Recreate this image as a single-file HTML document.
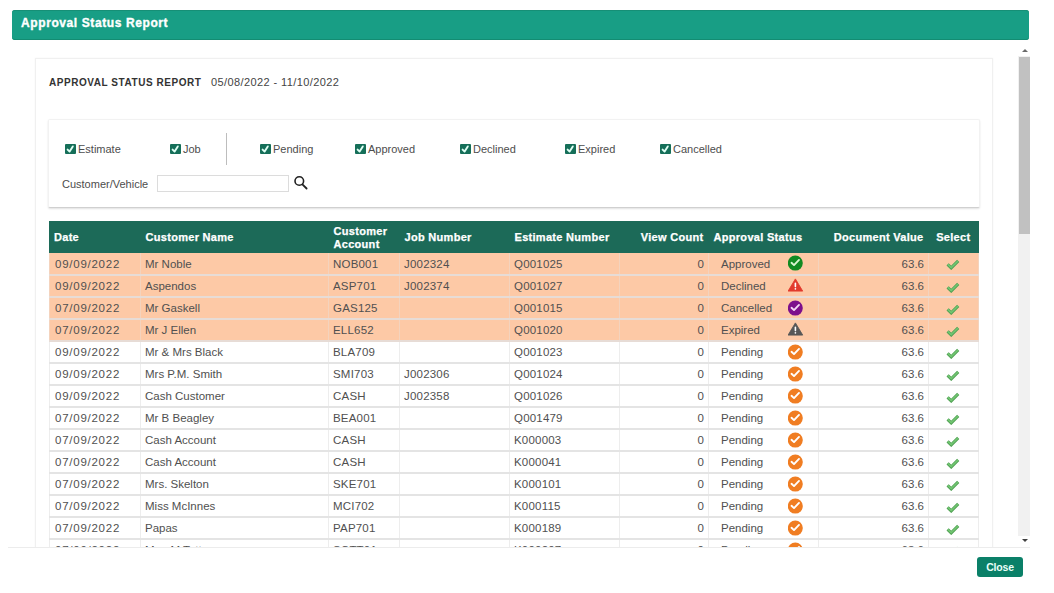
<!DOCTYPE html>
<html><head><meta charset="utf-8">
<style>
*{box-sizing:border-box}
html,body{margin:0;padding:0;background:#fff;width:1054px;height:593px;overflow:hidden;font-family:"Liberation Sans",sans-serif;color:#4d4d4d}
.hdr{position:absolute;left:12px;top:10px;width:1017px;height:30px;background:#189e85;border-radius:3px;box-shadow:inset 0 -1px 0 #138c72,inset 0 1px 0 #168f76;color:#fff;font-weight:bold;font-size:12px;line-height:30px;padding-left:9px;letter-spacing:0.6px;-webkit-text-stroke:0.35px #fff}
.hdr span{position:relative;top:-2px}
.clip{position:absolute;left:0;top:0;width:1054px;height:548px;overflow:hidden}
.footline{position:absolute;left:8px;top:547px;width:1022px;height:1px;background:#ececec}
.sb{position:absolute;left:1018px;top:56px;width:12px;height:480px;background:#f1f1f1}
.thumb{position:absolute;left:1019px;top:57px;width:11px;height:177px;background:#c1c1c1}
.arr{position:absolute;left:1022px;width:0;height:0;border-left:3px solid transparent;border-right:3px solid transparent}
.arr.up{top:49px;border-bottom:3px solid #6a6a6a}
.arr.dn{top:539px;border-top:3px solid #404040}
.card{position:absolute;left:35px;top:58px;width:958px;height:520px;border:1px solid #f0f0f0;box-shadow:0 0 2px rgba(0,0,0,0.04);background:#fff}
.title{position:absolute;left:49px;top:77px;font-size:10px;font-weight:bold;color:#333;letter-spacing:0.55px}
.dates{position:absolute;left:211px;top:76px;font-size:11px;color:#444;letter-spacing:0.4px}
.panel{position:absolute;left:48px;top:119px;width:932px;height:89px;border:1px solid #f2f2f2;border-bottom:1px solid #d0d0d0;box-shadow:0 1px 2px rgba(0,0,0,0.12);background:#fff;border-radius:2px}
.cb{position:absolute;top:144px;width:10.5px;height:10px;background:#156f59;border-radius:1px}
.cb svg{position:absolute;left:0;top:0}
.cbl{position:absolute;top:143px;font-size:11px;color:#4d4d4d;line-height:12px}
.divider{position:absolute;left:226px;top:133px;width:1px;height:32px;background:#bdbdbd}
.lbl{position:absolute;left:62px;top:178px;font-size:11px;color:#4d4d4d;line-height:12px}
.inp{position:absolute;left:157px;top:175px;width:132px;height:17px;border:1px solid #dcdcdc;background:#fff}
.srch{position:absolute;left:293px;top:175px}
table{position:absolute;left:49px;top:221px;border-collapse:collapse;font-size:11.5px;table-layout:fixed;width:930px}
th{background:#1c6a58;color:#fff;font-weight:bold;font-size:11px;letter-spacing:0.3px;text-align:left;height:32px;padding:2px 5px 0 5px;line-height:13.5px;vertical-align:middle;border:0;-webkit-text-stroke:0.25px #fff}
td{height:22px;padding:0 4px 0 5px;border-style:solid;border-width:2px 1px;border-color:#e4e4e4 #ededed;white-space:nowrap;color:#505050;vertical-align:middle}
tr:nth-child(2) td{border-top:0}
th:first-child{border-left:1px solid #1c6a58;padding-left:4px}
th:last-child{border-right:1px solid #1c6a58}
td.d0{letter-spacing:0.75px;padding-left:5px}
td.d{letter-spacing:0.2px;padding-left:4px}
td.n{padding-left:4px}
tr.o td{background:#fdc9a6;border-color:#e7dcd6 #f4d3bd}
td.r{text-align:right}
td.st{position:relative;padding-left:12px}
.ic{position:absolute;left:79px;top:2px}
td.c{position:relative}
.sel{position:absolute;left:17px;top:5px}
.close{position:absolute;left:977px;top:557px;width:46px;height:20px;background:#0a8068;border-radius:3px;color:#e8fff8;font-size:10.5px;font-weight:bold;text-align:center;line-height:21px;letter-spacing:-0.2px}
</style></head><body>
<div class="hdr"><span>Approval Status Report</span></div>
<div class="clip">
<div class="card"></div>
<div class="title">APPROVAL STATUS REPORT</div>
<div class="dates">05/08/2022 - 11/10/2022</div>
<div class="panel"></div>
<div class="cb" style="left:65px"><svg width="11" height="10" viewBox="0 0 11 10"><path d="M2.6 5.6 L4.6 7.6 L7.8 2.4" fill="none" stroke="#dffff4" stroke-width="1.9" stroke-linecap="round" stroke-linejoin="round"/></svg></div><div class="cbl" style="left:78px">Estimate</div>
<div class="cb" style="left:170px"><svg width="11" height="10" viewBox="0 0 11 10"><path d="M2.6 5.6 L4.6 7.6 L7.8 2.4" fill="none" stroke="#dffff4" stroke-width="1.9" stroke-linecap="round" stroke-linejoin="round"/></svg></div><div class="cbl" style="left:183px">Job</div>
<div class="divider"></div>
<div class="cb" style="left:260px"><svg width="11" height="10" viewBox="0 0 11 10"><path d="M2.6 5.6 L4.6 7.6 L7.8 2.4" fill="none" stroke="#dffff4" stroke-width="1.9" stroke-linecap="round" stroke-linejoin="round"/></svg></div><div class="cbl" style="left:273px">Pending</div>
<div class="cb" style="left:355px"><svg width="11" height="10" viewBox="0 0 11 10"><path d="M2.6 5.6 L4.6 7.6 L7.8 2.4" fill="none" stroke="#dffff4" stroke-width="1.9" stroke-linecap="round" stroke-linejoin="round"/></svg></div><div class="cbl" style="left:368px">Approved</div>
<div class="cb" style="left:460px"><svg width="11" height="10" viewBox="0 0 11 10"><path d="M2.6 5.6 L4.6 7.6 L7.8 2.4" fill="none" stroke="#dffff4" stroke-width="1.9" stroke-linecap="round" stroke-linejoin="round"/></svg></div><div class="cbl" style="left:473px">Declined</div>
<div class="cb" style="left:565px"><svg width="11" height="10" viewBox="0 0 11 10"><path d="M2.6 5.6 L4.6 7.6 L7.8 2.4" fill="none" stroke="#dffff4" stroke-width="1.9" stroke-linecap="round" stroke-linejoin="round"/></svg></div><div class="cbl" style="left:578px">Expired</div>
<div class="cb" style="left:660px"><svg width="11" height="10" viewBox="0 0 11 10"><path d="M2.6 5.6 L4.6 7.6 L7.8 2.4" fill="none" stroke="#dffff4" stroke-width="1.9" stroke-linecap="round" stroke-linejoin="round"/></svg></div><div class="cbl" style="left:673px">Cancelled</div>
<div class="lbl">Customer/Vehicle</div>
<div class="inp"></div>
<svg class="srch" width="16" height="16" viewBox="0 0 16 16"><circle cx="6.3" cy="6" r="4.3" fill="none" stroke="#222" stroke-width="1.6"/><path d="M9.4 9.3 L13.6 13.5" stroke="#222" stroke-width="1.8" stroke-linecap="round"/></svg>
<table>
<colgroup><col style="width:91px"><col style="width:188px"><col style="width:71px"><col style="width:110px"><col style="width:110px"><col style="width:89px"><col style="width:110px"><col style="width:110px"><col style="width:50px"></colgroup>
<tr><th>Date</th><th>Customer Name</th><th>Customer Account</th><th>Job Number</th><th>Estimate Number</th><th style="text-align:right">View Count</th><th>Approval Status</th><th style="text-align:right">Document Value</th><th style="text-align:center;padding:2px 0 0 0">Select</th></tr>
<tr class="o"><td class="d0">09/09/2022</td><td class="n">Mr Noble</td><td class="d">NOB001</td><td class="d">J002324</td><td class="d">Q001025</td><td class="r">0</td><td class="st">Approved<svg class="ic" width="16" height="16" viewBox="0 0 16 16"><circle cx="7.3" cy="8.1" r="7.5" fill="#118a22"/><path d="M3.5 7.8 L6.0 10.1 L11.0 4.9" fill="none" stroke="#d8f5d0" stroke-width="1.9" stroke-linecap="round" stroke-linejoin="round"/></svg></td><td class="r">63.6</td><td class="c"><svg class="sel" width="16" height="12" viewBox="0 0 16 12"><path d="M1.6 6.4 L5.2 9.9 L12.2 2.8" fill="none" stroke="#4f9f52" stroke-width="3.1" stroke-linecap="butt" stroke-linejoin="miter"/><path d="M1.9 6.4 L5.2 9.6 L12.0 3.0" fill="none" stroke="#72c672" stroke-width="1.6" stroke-linecap="butt" stroke-linejoin="miter"/></svg></td></tr>
<tr class="o"><td class="d0">09/09/2022</td><td class="n">Aspendos</td><td class="d">ASP701</td><td class="d">J002374</td><td class="d">Q001027</td><td class="r">0</td><td class="st">Declined<svg class="ic" width="16" height="16" viewBox="0 0 16 16"><path d="M7.4 0.9 L14.7 13.1 L0.1 13.1 Z" fill="#e23b2e" stroke="#e23b2e" stroke-width="0.9" stroke-linejoin="round"/><path d="M7.4 5.4 L7.4 8.6" stroke="#fff" stroke-width="1.6" stroke-linecap="round"/><circle cx="7.4" cy="10.8" r="0.85" fill="#fff"/></svg></td><td class="r">63.6</td><td class="c"><svg class="sel" width="16" height="12" viewBox="0 0 16 12"><path d="M1.6 6.4 L5.2 9.9 L12.2 2.8" fill="none" stroke="#4f9f52" stroke-width="3.1" stroke-linecap="butt" stroke-linejoin="miter"/><path d="M1.9 6.4 L5.2 9.6 L12.0 3.0" fill="none" stroke="#72c672" stroke-width="1.6" stroke-linecap="butt" stroke-linejoin="miter"/></svg></td></tr>
<tr class="o"><td class="d0">07/09/2022</td><td class="n">Mr Gaskell</td><td class="d">GAS125</td><td class="d"></td><td class="d">Q001015</td><td class="r">0</td><td class="st">Cancelled<svg class="ic" width="16" height="16" viewBox="0 0 16 16"><circle cx="7.3" cy="8.1" r="7.5" fill="#7d0f8c"/><path d="M3.5 7.8 L6.0 10.1 L11.0 4.9" fill="none" stroke="#f4d6f4" stroke-width="1.9" stroke-linecap="round" stroke-linejoin="round"/></svg></td><td class="r">63.6</td><td class="c"><svg class="sel" width="16" height="12" viewBox="0 0 16 12"><path d="M1.6 6.4 L5.2 9.9 L12.2 2.8" fill="none" stroke="#4f9f52" stroke-width="3.1" stroke-linecap="butt" stroke-linejoin="miter"/><path d="M1.9 6.4 L5.2 9.6 L12.0 3.0" fill="none" stroke="#72c672" stroke-width="1.6" stroke-linecap="butt" stroke-linejoin="miter"/></svg></td></tr>
<tr class="o"><td class="d0">07/09/2022</td><td class="n">Mr J Ellen</td><td class="d">ELL652</td><td class="d"></td><td class="d">Q001020</td><td class="r">0</td><td class="st">Expired<svg class="ic" width="16" height="16" viewBox="0 0 16 16"><path d="M7.4 0.9 L14.7 13.1 L0.1 13.1 Z" fill="#575757" stroke="#575757" stroke-width="0.9" stroke-linejoin="round"/><path d="M7.4 5.4 L7.4 8.6" stroke="#fff" stroke-width="1.6" stroke-linecap="round"/><circle cx="7.4" cy="10.8" r="0.85" fill="#fff"/></svg></td><td class="r">63.6</td><td class="c"><svg class="sel" width="16" height="12" viewBox="0 0 16 12"><path d="M1.6 6.4 L5.2 9.9 L12.2 2.8" fill="none" stroke="#4f9f52" stroke-width="3.1" stroke-linecap="butt" stroke-linejoin="miter"/><path d="M1.9 6.4 L5.2 9.6 L12.0 3.0" fill="none" stroke="#72c672" stroke-width="1.6" stroke-linecap="butt" stroke-linejoin="miter"/></svg></td></tr>
<tr><td class="d0">09/09/2022</td><td class="n">Mr &amp; Mrs Black</td><td class="d">BLA709</td><td class="d"></td><td class="d">Q001023</td><td class="r">0</td><td class="st">Pending<svg class="ic" width="16" height="16" viewBox="0 0 16 16"><circle cx="7.3" cy="8.1" r="7.5" fill="#f07d22"/><path d="M3.5 7.8 L6.0 10.1 L11.0 4.9" fill="none" stroke="#fff" stroke-width="1.9" stroke-linecap="round" stroke-linejoin="round"/></svg></td><td class="r">63.6</td><td class="c"><svg class="sel" width="16" height="12" viewBox="0 0 16 12"><path d="M1.6 6.4 L5.2 9.9 L12.2 2.8" fill="none" stroke="#4f9f52" stroke-width="3.1" stroke-linecap="butt" stroke-linejoin="miter"/><path d="M1.9 6.4 L5.2 9.6 L12.0 3.0" fill="none" stroke="#72c672" stroke-width="1.6" stroke-linecap="butt" stroke-linejoin="miter"/></svg></td></tr>
<tr><td class="d0">09/09/2022</td><td class="n">Mrs P.M. Smith</td><td class="d">SMI703</td><td class="d">J002306</td><td class="d">Q001024</td><td class="r">0</td><td class="st">Pending<svg class="ic" width="16" height="16" viewBox="0 0 16 16"><circle cx="7.3" cy="8.1" r="7.5" fill="#f07d22"/><path d="M3.5 7.8 L6.0 10.1 L11.0 4.9" fill="none" stroke="#fff" stroke-width="1.9" stroke-linecap="round" stroke-linejoin="round"/></svg></td><td class="r">63.6</td><td class="c"><svg class="sel" width="16" height="12" viewBox="0 0 16 12"><path d="M1.6 6.4 L5.2 9.9 L12.2 2.8" fill="none" stroke="#4f9f52" stroke-width="3.1" stroke-linecap="butt" stroke-linejoin="miter"/><path d="M1.9 6.4 L5.2 9.6 L12.0 3.0" fill="none" stroke="#72c672" stroke-width="1.6" stroke-linecap="butt" stroke-linejoin="miter"/></svg></td></tr>
<tr><td class="d0">09/09/2022</td><td class="n">Cash Customer</td><td class="d">CASH</td><td class="d">J002358</td><td class="d">Q001026</td><td class="r">0</td><td class="st">Pending<svg class="ic" width="16" height="16" viewBox="0 0 16 16"><circle cx="7.3" cy="8.1" r="7.5" fill="#f07d22"/><path d="M3.5 7.8 L6.0 10.1 L11.0 4.9" fill="none" stroke="#fff" stroke-width="1.9" stroke-linecap="round" stroke-linejoin="round"/></svg></td><td class="r">63.6</td><td class="c"><svg class="sel" width="16" height="12" viewBox="0 0 16 12"><path d="M1.6 6.4 L5.2 9.9 L12.2 2.8" fill="none" stroke="#4f9f52" stroke-width="3.1" stroke-linecap="butt" stroke-linejoin="miter"/><path d="M1.9 6.4 L5.2 9.6 L12.0 3.0" fill="none" stroke="#72c672" stroke-width="1.6" stroke-linecap="butt" stroke-linejoin="miter"/></svg></td></tr>
<tr><td class="d0">07/09/2022</td><td class="n">Mr B Beagley</td><td class="d">BEA001</td><td class="d"></td><td class="d">Q001479</td><td class="r">0</td><td class="st">Pending<svg class="ic" width="16" height="16" viewBox="0 0 16 16"><circle cx="7.3" cy="8.1" r="7.5" fill="#f07d22"/><path d="M3.5 7.8 L6.0 10.1 L11.0 4.9" fill="none" stroke="#fff" stroke-width="1.9" stroke-linecap="round" stroke-linejoin="round"/></svg></td><td class="r">63.6</td><td class="c"><svg class="sel" width="16" height="12" viewBox="0 0 16 12"><path d="M1.6 6.4 L5.2 9.9 L12.2 2.8" fill="none" stroke="#4f9f52" stroke-width="3.1" stroke-linecap="butt" stroke-linejoin="miter"/><path d="M1.9 6.4 L5.2 9.6 L12.0 3.0" fill="none" stroke="#72c672" stroke-width="1.6" stroke-linecap="butt" stroke-linejoin="miter"/></svg></td></tr>
<tr><td class="d0">07/09/2022</td><td class="n">Cash Account</td><td class="d">CASH</td><td class="d"></td><td class="d">K000003</td><td class="r">0</td><td class="st">Pending<svg class="ic" width="16" height="16" viewBox="0 0 16 16"><circle cx="7.3" cy="8.1" r="7.5" fill="#f07d22"/><path d="M3.5 7.8 L6.0 10.1 L11.0 4.9" fill="none" stroke="#fff" stroke-width="1.9" stroke-linecap="round" stroke-linejoin="round"/></svg></td><td class="r">63.6</td><td class="c"><svg class="sel" width="16" height="12" viewBox="0 0 16 12"><path d="M1.6 6.4 L5.2 9.9 L12.2 2.8" fill="none" stroke="#4f9f52" stroke-width="3.1" stroke-linecap="butt" stroke-linejoin="miter"/><path d="M1.9 6.4 L5.2 9.6 L12.0 3.0" fill="none" stroke="#72c672" stroke-width="1.6" stroke-linecap="butt" stroke-linejoin="miter"/></svg></td></tr>
<tr><td class="d0">07/09/2022</td><td class="n">Cash Account</td><td class="d">CASH</td><td class="d"></td><td class="d">K000041</td><td class="r">0</td><td class="st">Pending<svg class="ic" width="16" height="16" viewBox="0 0 16 16"><circle cx="7.3" cy="8.1" r="7.5" fill="#f07d22"/><path d="M3.5 7.8 L6.0 10.1 L11.0 4.9" fill="none" stroke="#fff" stroke-width="1.9" stroke-linecap="round" stroke-linejoin="round"/></svg></td><td class="r">63.6</td><td class="c"><svg class="sel" width="16" height="12" viewBox="0 0 16 12"><path d="M1.6 6.4 L5.2 9.9 L12.2 2.8" fill="none" stroke="#4f9f52" stroke-width="3.1" stroke-linecap="butt" stroke-linejoin="miter"/><path d="M1.9 6.4 L5.2 9.6 L12.0 3.0" fill="none" stroke="#72c672" stroke-width="1.6" stroke-linecap="butt" stroke-linejoin="miter"/></svg></td></tr>
<tr><td class="d0">07/09/2022</td><td class="n">Mrs. Skelton</td><td class="d">SKE701</td><td class="d"></td><td class="d">K000101</td><td class="r">0</td><td class="st">Pending<svg class="ic" width="16" height="16" viewBox="0 0 16 16"><circle cx="7.3" cy="8.1" r="7.5" fill="#f07d22"/><path d="M3.5 7.8 L6.0 10.1 L11.0 4.9" fill="none" stroke="#fff" stroke-width="1.9" stroke-linecap="round" stroke-linejoin="round"/></svg></td><td class="r">63.6</td><td class="c"><svg class="sel" width="16" height="12" viewBox="0 0 16 12"><path d="M1.6 6.4 L5.2 9.9 L12.2 2.8" fill="none" stroke="#4f9f52" stroke-width="3.1" stroke-linecap="butt" stroke-linejoin="miter"/><path d="M1.9 6.4 L5.2 9.6 L12.0 3.0" fill="none" stroke="#72c672" stroke-width="1.6" stroke-linecap="butt" stroke-linejoin="miter"/></svg></td></tr>
<tr><td class="d0">07/09/2022</td><td class="n">Miss McInnes</td><td class="d">MCI702</td><td class="d"></td><td class="d">K000115</td><td class="r">0</td><td class="st">Pending<svg class="ic" width="16" height="16" viewBox="0 0 16 16"><circle cx="7.3" cy="8.1" r="7.5" fill="#f07d22"/><path d="M3.5 7.8 L6.0 10.1 L11.0 4.9" fill="none" stroke="#fff" stroke-width="1.9" stroke-linecap="round" stroke-linejoin="round"/></svg></td><td class="r">63.6</td><td class="c"><svg class="sel" width="16" height="12" viewBox="0 0 16 12"><path d="M1.6 6.4 L5.2 9.9 L12.2 2.8" fill="none" stroke="#4f9f52" stroke-width="3.1" stroke-linecap="butt" stroke-linejoin="miter"/><path d="M1.9 6.4 L5.2 9.6 L12.0 3.0" fill="none" stroke="#72c672" stroke-width="1.6" stroke-linecap="butt" stroke-linejoin="miter"/></svg></td></tr>
<tr><td class="d0">07/09/2022</td><td class="n">Papas</td><td class="d">PAP701</td><td class="d"></td><td class="d">K000189</td><td class="r">0</td><td class="st">Pending<svg class="ic" width="16" height="16" viewBox="0 0 16 16"><circle cx="7.3" cy="8.1" r="7.5" fill="#f07d22"/><path d="M3.5 7.8 L6.0 10.1 L11.0 4.9" fill="none" stroke="#fff" stroke-width="1.9" stroke-linecap="round" stroke-linejoin="round"/></svg></td><td class="r">63.6</td><td class="c"><svg class="sel" width="16" height="12" viewBox="0 0 16 12"><path d="M1.6 6.4 L5.2 9.9 L12.2 2.8" fill="none" stroke="#4f9f52" stroke-width="3.1" stroke-linecap="butt" stroke-linejoin="miter"/><path d="M1.9 6.4 L5.2 9.6 L12.0 3.0" fill="none" stroke="#72c672" stroke-width="1.6" stroke-linecap="butt" stroke-linejoin="miter"/></svg></td></tr>
<tr><td class="d0">07/09/2022</td><td class="n">Mrs. M Tott</td><td class="d">SCTT01</td><td class="d"></td><td class="d">K000207</td><td class="r">0</td><td class="st">Pending<svg class="ic" width="16" height="16" viewBox="0 0 16 16"><circle cx="7.3" cy="8.1" r="7.5" fill="#f07d22"/><path d="M3.5 7.8 L6.0 10.1 L11.0 4.9" fill="none" stroke="#fff" stroke-width="1.9" stroke-linecap="round" stroke-linejoin="round"/></svg></td><td class="r">63.6</td><td class="c"><svg class="sel" width="16" height="12" viewBox="0 0 16 12"><path d="M1.6 6.4 L5.2 9.9 L12.2 2.8" fill="none" stroke="#4f9f52" stroke-width="3.1" stroke-linecap="butt" stroke-linejoin="miter"/><path d="M1.9 6.4 L5.2 9.6 L12.0 3.0" fill="none" stroke="#72c672" stroke-width="1.6" stroke-linecap="butt" stroke-linejoin="miter"/></svg></td></tr>
</table>
<div class="sb"></div><div class="thumb"></div><div class="arr up"></div><div class="arr dn"></div>
<div class="footline"></div>
</div>
<div class="close">Close</div>
</body></html>
